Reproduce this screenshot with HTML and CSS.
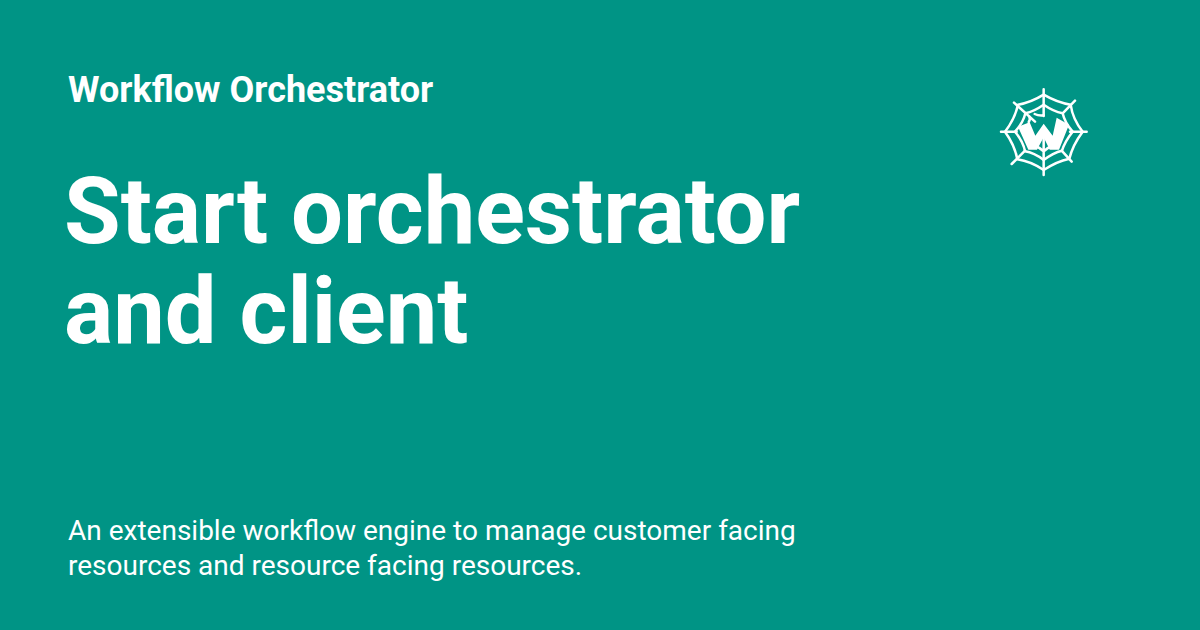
FILE: index.html
```html
<!DOCTYPE html>
<html lang="en">
<head>
<meta charset="utf-8">
<title>Start orchestrator and client</title>
<link rel="stylesheet" href="styles.css">
</head>
<body>
<main class="card">
  <header class="top">
    <div class="site">Workflow Orchestrator</div>
    <svg class="logo" viewBox="0 0 318 312" aria-hidden="true">
      <g class="web">
        <path d="M161 28V108M33 155H80M240 155H290M72 68L135 125M255 62L218 100M65 252L105 212M245 245L215 212"/>
        <path d="M161 44Q202 68 242 74Q248 118 278 155Q248 195 238 236Q200 244 161 270Q122 244 82 238Q74 195 45 155Q74 118 84 74Q122 68 161 44Z"/>
        <path d="M161 74Q190 94 218 100Q224 128 248 155Q224 185 216 212Q190 218 161 240Q132 218 105 214Q100 185 75 155Q100 128 106 100Q132 94 161 74Z"/>
        <path d="M161 106Q146 108 134 102M118 110Q122 118 116 126"/>
      </g>
      <path class="mark" d="M84 140L119 127L136 167L161 131L188 167L200 113L237 134L207 209L179 209L161 172L141 209L115 209Z"/>
      <path class="web" d="M161 172V285M136 198Q152 204 161 214Q170 204 186 198"/>
    </svg>
  </header>
  <h1 class="title">Start orchestrator and client</h1>
  <p class="desc">An extensible workflow engine to manage customer facing resources and resource facing resources.</p>
</main>
</body>
</html>
```
FILE: styles.css
```css
html, body { margin: 0; padding: 0; }
body { background: #009485; }
.card {
  box-sizing: border-box;
  width: 1200px;
  height: 630px;
  padding: 69px 112px 47px 68px;
  display: flex;
  flex-direction: column;
  font-family: Roboto, sans-serif;
  color: #fff;
  background: #009485;
  overflow: hidden;
}
.top {
  display: flex;
  justify-content: space-between;
  align-items: flex-start;
}
.site {
  font-size: 36px;
  font-weight: 700;
  line-height: 42px;
}
.logo {
  width: 106px;
  height: 104px;
  margin: 11px -8px 0 0;
  flex: none;
}
.web { fill: none; stroke: #fff; stroke-width: 7.5; stroke-linecap: round; stroke-linejoin: round; }
.mark { fill: #fff; }
.title {
  margin: -22px 0 0 -4px;
  width: 800px;
  font-size: 92px;
  font-weight: 700;
  line-height: 100px;
}
.desc {
  margin: auto 0 0;
  width: 760px;
  font-size: 28px;
  font-weight: 400;
  line-height: 35px;
}
```
